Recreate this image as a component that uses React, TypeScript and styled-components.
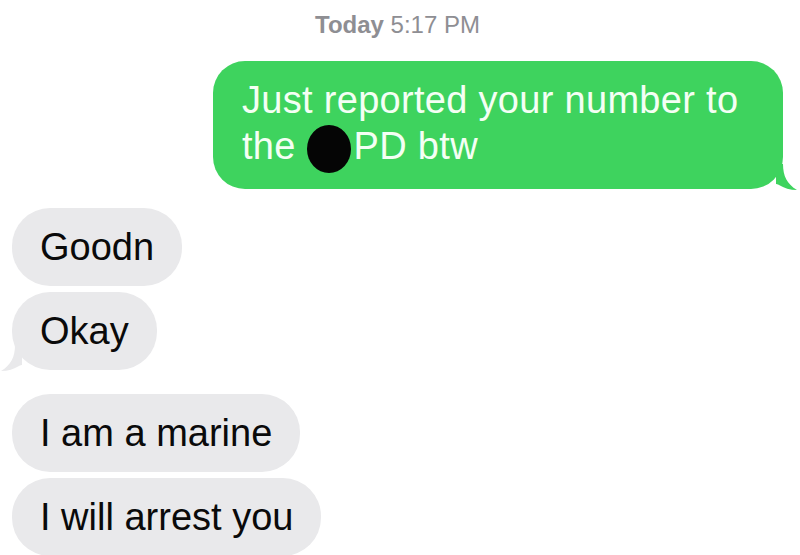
import React from 'react';
import styled, { createGlobalStyle } from 'styled-components';

const GlobalStyle = createGlobalStyle`
  html, body {
    margin: 0;
    padding: 0;
    background: #fff;
    overflow: hidden;
  }
  body {
    font-family: "Liberation Sans", Arial, sans-serif;
  }
`;

const Thread = styled.div`
  width: 800px;
  height: 555px;
  box-sizing: border-box;
  padding: 10px 17px 0 12px;
  display: flex;
  flex-direction: column;
  overflow: hidden;
`;

const Stamp = styled.div`
  align-self: center;
  height: 30px;
  line-height: 30px;
  font-size: 24px;
  color: #8e8e93;
  margin-bottom: 21px;

  b {
    font-weight: 700;
  }
`;

const Group = styled.div<{ $side: 'in' | 'out' }>`
  display: flex;
  flex-direction: column;
  align-items: ${(p) => (p.$side === 'out' ? 'flex-end' : 'flex-start')};
  gap: 6px;
  margin-bottom: ${(p) => (p.$side === 'out' ? 19 : 24)}px;
`;

const Bubble = styled.div<{ $side: 'in' | 'out' }>`
  position: relative;
  box-sizing: border-box;
  max-width: ${(p) => (p.$side === 'out' ? '570px' : '560px')};
  padding: 16px 28px 16px ${(p) => (p.$side === 'out' ? 29 : 28)}px;
  border-radius: ${(p) => (p.$side === 'out' ? 32 : 38)}px;
  background: ${(p) => (p.$side === 'out' ? '#3ed35e' : '#e9e9eb')};
  color: ${(p) => (p.$side === 'out' ? '#f4fff4' : '#0a0a0a')};
  font-size: 38px;
  line-height: 46px;
  letter-spacing: ${(p) => (p.$side === 'out' ? 0.3 : 0)}px;
`;

const Blot = styled.span`
  display: inline-block;
  width: 44px;
  height: 48px;
  margin-right: 3px;
  border-radius: 50%;
  background: #050505;
  vertical-align: -14px;
  filter: blur(0.5px);
`;

const TailSvg = styled.svg<{ $side: 'in' | 'out' }>`
  position: absolute;
  bottom: -1px;
  width: 22px;
  height: 26px;
  ${(p) => (p.$side === 'out' ? 'right: -15px;' : 'left: -12px; transform: scaleX(-1);')}
`;

function Tail({ side }: { side: 'in' | 'out' }) {
  const fill = side === 'out' ? '#3ed35e' : '#e9e9eb';
  return (
    <TailSvg $side={side} viewBox="0 0 22 26">
      <path d="M0 0 L7 0 C7 12 11 20 21 26 C14 26 8 24 3 21 C2 20 0 20 0 20 Z" fill={fill} />
    </TailSvg>
  );
}

type Msg = { text: React.ReactNode; tail?: boolean };

const incoming: Msg[][] = [
  [{ text: 'Goodn' }, { text: 'Okay', tail: true }],
  [{ text: 'I am a marine' }, { text: 'I will arrest you' }],
];

export default function App() {
  return (
    <>
      <GlobalStyle />
      <Thread>
        <Stamp>
          <b>Today</b> 5:17 PM
        </Stamp>
        <Group $side="out">
          <Bubble $side="out">
            Just reported your number to the <Blot />PD btw
            <Tail side="out" />
          </Bubble>
        </Group>
        {incoming.map((group, gi) => (
          <Group $side="in" key={gi}>
            {group.map((m, mi) => (
              <Bubble $side="in" key={mi}>
                {m.text}
                {m.tail && <Tail side="in" />}
              </Bubble>
            ))}
          </Group>
        ))}
      </Thread>
    </>
  );
}
